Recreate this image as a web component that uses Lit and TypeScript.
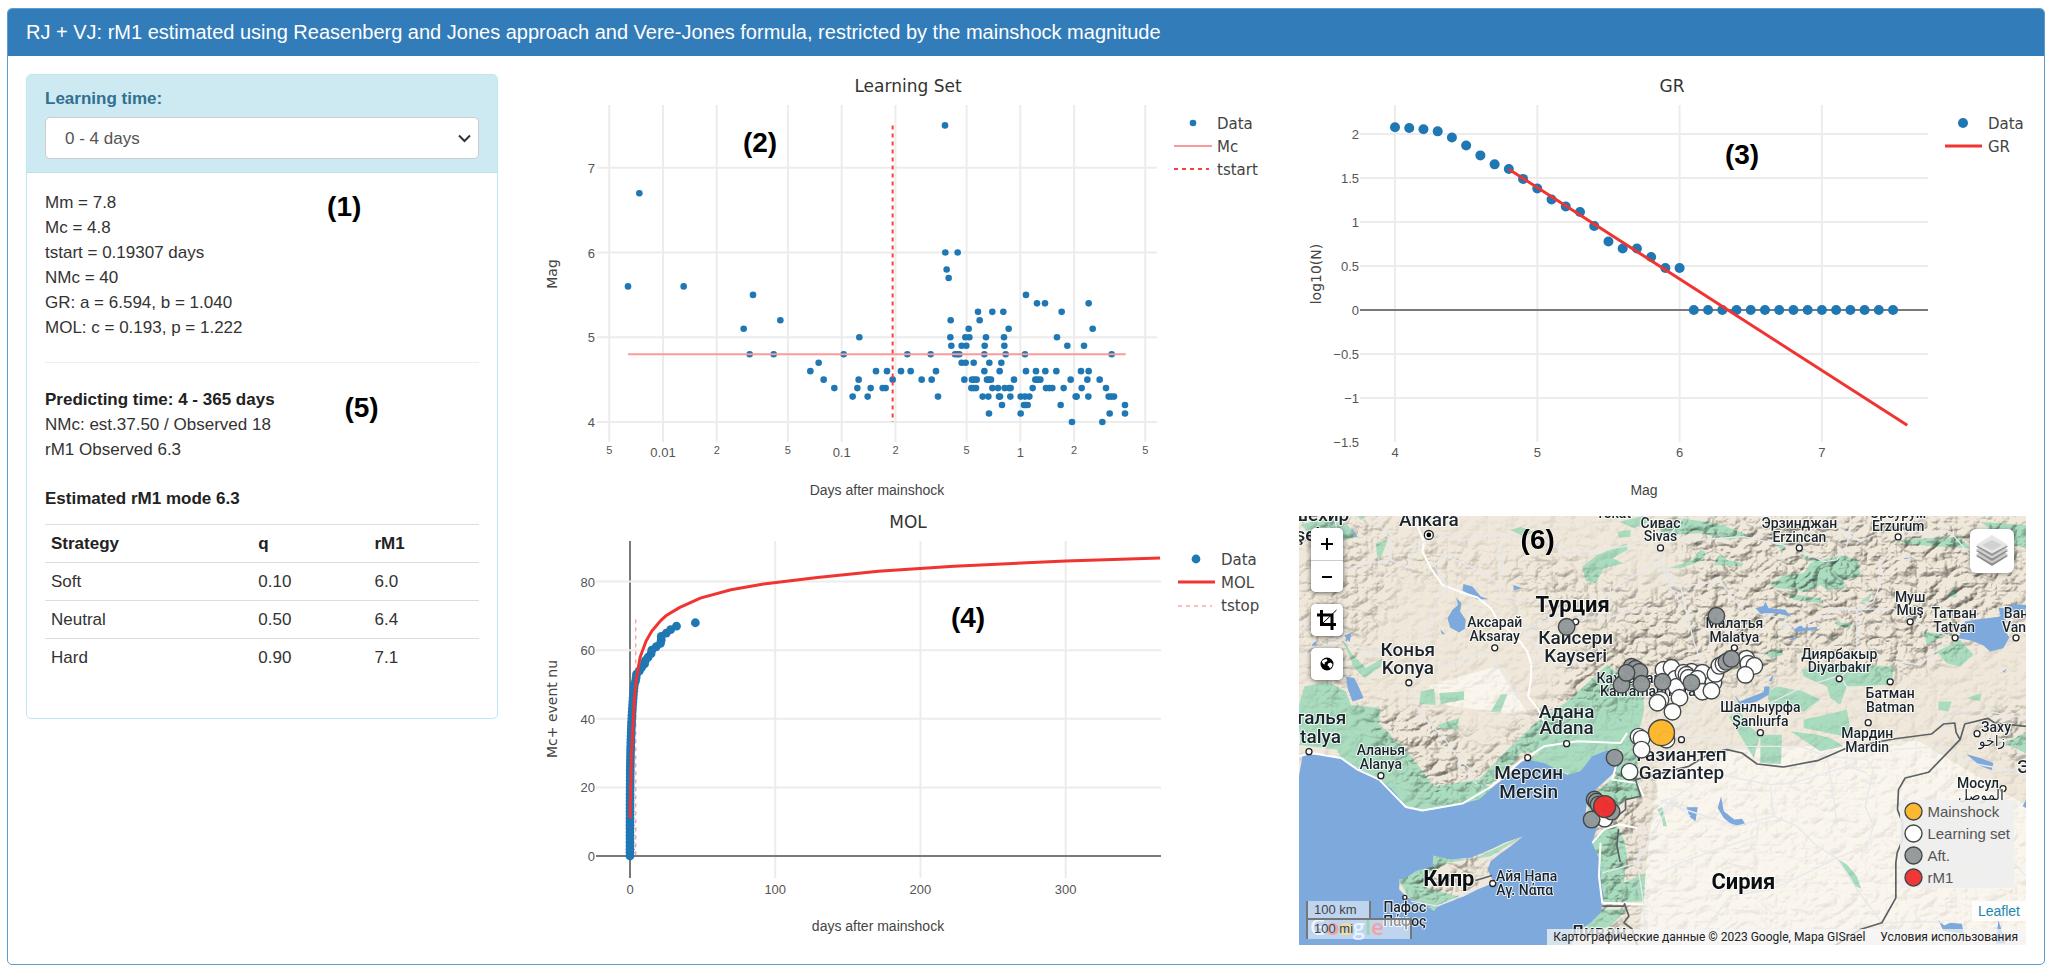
import { LitElement, html, svg, css } from "lit";
import { customElement } from "lit/decorators.js";

const SANS = css`"Liberation Sans", Arial, sans-serif`;

const chartStyles = css`
  :host { display: block; }
  svg { display: block; width: 100%; height: auto; overflow: visible; }
  text { fill: #444; }
  .title { font: 17px "DejaVu Sans", Verdana, sans-serif; fill: #333; text-anchor: middle; }
  .tick { font: 13px ${SANS}; fill: #555; text-anchor: middle; }
  .tick.left { text-anchor: end; }
  .minor { font-size: 11px; }
  .axis { font: 14px ${SANS}; fill: #444; text-anchor: middle; }
  .axis.side { font-family: "DejaVu Sans", Verdana, sans-serif; }
  .key { font: 15px "DejaVu Sans", Verdana, sans-serif; }
  .mark { font: bold 28px ${SANS}; fill: #000; text-anchor: middle; }
  .grid { stroke: #ececec; stroke-width: 2; }
  .zero { stroke: #777b7d; stroke-width: 2; }
  .dot { fill: #1f77b4; }
  .line { fill: none; stroke: #f03431; stroke-width: 3; }
  .thin { fill: none; stroke: #fa9a9a; stroke-width: 2; }
  .dash { fill: none; stroke: #f8403c; stroke-width: 2; stroke-dasharray: 4 4; }
  .faint { fill: none; stroke: #f37f7f; stroke-width: 1; stroke-dasharray: 4 4; }
`;

const vline = (x: number, top: number, bottom: number, cls = "grid") =>
  svg`<line class=${cls} x1=${x} x2=${x} y1=${top} y2=${bottom}></line>`;
const hline = (y: number, left: number, right: number, cls = "grid") =>
  svg`<line class=${cls} x1=${left} x2=${right} y1=${y} y2=${y}></line>`;

/* Aftershocks: magnitude followed by log-time steps, 536 steps to a decade. */
const EARLY: number[][] = [
  [6.7, 328], [5.6, 294, 461], [5.5, 669], [5.2, 751], [5.1, 641], [5, 988],
  [4.8, 659, 731, 941], [4.7, 866], [4.6, 841, 1038, 1071],
  [4.5, 881, 986, 1088], [4.4, 913, 982, 1022, 1058, 1067], [4.3, 968, 1013],
];
const LATE: number[][] = [
  [7.5, 135], [6, 136, 173], [5.8, 140], [5.7, 146], [5.5, 378], [5.4, 411, 435, 566],
  [5.3, 234, 277, 310, 485], [5.2, 152, 239], [5.1, 206, 326, 578],
  [5, 151, 196, 208, 258, 312, 471], [4.9, 154, 185, 199, 254, 313, 502, 552],
  [4.8, 22, 92, 165, 172, 178, 253, 317, 375, 635], [4.7, 185, 197, 221, 268, 304],
  [4.6, 3, 32, 108, 253, 299, 378, 408, 436, 469, 543, 566],
  [4.5, 65, 95, 193, 216, 223, 230, 261, 267, 273, 342, 406, 413, 421, 512, 562, 599],
  [4.4, 214, 221, 228, 277, 294, 314, 327, 332, 398, 438, 448, 457, 491, 545, 618],
  [4.3, 114, 248, 265, 297, 300, 331, 362, 375, 388, 527, 530, 565, 626, 634, 642],
  [4.2, 306, 372, 377, 383, 482, 675], [4.1, 267, 362, 629, 675], [4, 516, 607],
];

@customElement("learning-chart")
export class LearningChart extends LitElement {
  static styles = chartStyles;
  render() {
    const step = (s: number) => s / 3 - 5;
    const x = (days: number) => 128 + (Math.log10(days) + 2) * 178.67;
    const y = (m: number) => 348 - (m - 4) * 84.75;
    const ticks: [number, string, boolean][] = [
      [0.005, "5", true], [0.01, "0.01", false], [0.02, "2", true], [0.05, "5", true],
      [0.1, "0.1", false], [0.2, "2", true], [0.5, "5", true], [1, "1", false],
      [2, "2", true], [5, "5", true],
    ];
    const dots = (rows: number[][], shift: number) =>
      rows.flatMap(([m, ...steps]) =>
        steps.map((s) => svg`<circle class="dot" r="3.3" cx=${step(s + shift)} cy=${y(m)}></circle>`));
    return html`<svg viewBox="0 0 727 435" role="img" aria-label="Learning Set">
      <text class="title" x="373" y="18">Learning Set</text>
      ${ticks.map(([v, label, minor]) => svg`${vline(x(v), 31, 368)}
        <text class=${minor ? "tick minor" : "tick"} x=${x(v)} y=${minor ? 380 : 383}>${label}</text>`)}
      ${[4, 5, 6, 7].map((m) => svg`${hline(y(m), 62, 622)}
        <text class="tick left" x="60" y=${y(m) + 5}>${m}</text>`)}
      ${dots(EARLY, 0)}${dots(LATE, 1110)}
      ${hline(y(4.8), step(294), step(1787), "thin")}
      ${vline(step(1088), y(7.5), y(4), "dash")}
      <text class="axis" x="342" y="421">Days after mainshock</text>
      <text class="axis side" transform="translate(22 200) rotate(-90)">Mag</text>
      <circle class="dot" cx="658" cy="49" r="3.3"></circle>
      <text class="key" x="682" y="55">Data</text>
      ${hline(72, 639, 677, "thin")}
      <text class="key" x="682" y="78">Mc</text>
      ${hline(95, 639, 674, "dash")}
      <text class="key" x="682" y="101">tstart</text>
      <text class="mark" x="225" y="78">(2)</text>
    </svg>`;
  }
}

const GR_VALUES = [
  2.076, 2.068, 2.053, 2.03, 1.96, 1.87, 1.757, 1.655, 1.602, 1.49, 1.38, 1.255, 1.176,
  1.114, 0.954, 0.778, 0.699, 0.699, 0.602, 0.477, 0.477,
  0, 0, 0, 0, 0, 0, 0, 0, 0, 0, 0, 0, 0, 0, 0,
];

@customElement("gr-chart")
export class GrChart extends LitElement {
  static styles = chartStyles;
  render() {
    const x = (m: number) => 96 + (m - 4) * 142.3;
    const y = (v: number) => 236 - v * 88;
    return html`<svg viewBox="0 0 727 435" role="img" aria-label="GR">
      <text class="title" x="373" y="18">GR</text>
      ${[4, 5, 6, 7].map((m) => svg`${vline(x(m), 31, 368)}
        <text class="tick" x=${x(m)} y="383">${m}</text>`)}
      ${[2, 1.5, 1, 0.5, 0, -0.5, -1, -1.5].map((v) => svg`
        ${v === -1.5 ? "" : hline(y(v), 61, 629, v === 0 ? "zero" : "grid")}
        <text class="tick left" x="60" y=${y(v) + 5}>${String(v).replace("-", "−")}</text>`)}
      ${GR_VALUES.map((v, i) => svg`<circle class="dot" r="5" cx=${x(4 + i / 10)} cy=${y(v)}></circle>`)}
      <line class="line" x1=${x(4.8)} y1=${y(1.6)} x2=${x(7.6)} y2=${y(-1.31)}></line>
      <text class="axis" x="345" y="421">Mag</text>
      <text class="axis side" transform="translate(22 200) rotate(-90)">log10(N)</text>
      <circle class="dot" cx="664" cy="49" r="5"></circle>
      <text class="key" x="689" y="55">Data</text>
      ${hline(72, 646, 683, "line")}
      <text class="key" x="689" y="78">GR</text>
      <text class="mark" x="443" y="90">(3)</text>
    </svg>`;
  }
}

const MOL_LATE = [
  [3, 50], [3.8, 51], [4.2, 52], [4.5, 53], [6.5, 54], [8, 55], [10, 56], [10.6, 57], [12.5, 58],
  [14.5, 59], [15, 60], [18, 61], [21, 62], [21.5, 63], [21.5, 64], [25, 65], [28, 66], [32, 67], [45, 68],
];
const MOL_FIT = [
  [0, 11], [0.5, 20], [1, 30], [2, 38], [3, 46], [4.5, 52], [7, 58], [11, 62.6], [15, 65.6], [21.5, 68.8],
  [25, 70.1], [34, 72.4], [48.4, 75.2], [69.5, 77.6], [92, 79.3], [129, 81.2], [171, 83],
  [223, 84.5], [300, 86], [365, 86.9],
];

@customElement("mol-chart")
export class MolChart extends LitElement {
  static styles = chartStyles;
  render() {
    const x = (d: number) => 95 + d * 1.4523;
    const y = (n: number) => 340 - n * 3.43;
    const early = Array.from({ length: 50 }, (_, n) => [3 * Math.pow(n / 50, 4), n]);
    return html`<svg viewBox="0 0 727 430" role="img" aria-label="MOL">
      <text class="title" x="373" y="12">MOL</text>
      ${[0, 100, 200, 300].map((d) => svg`${vline(x(d), 25, 362, d ? "grid" : "zero")}
        <text class="tick" x=${x(d)} y="378">${d}</text>`)}
      ${[0, 20, 40, 60, 80].map((n) => svg`${hline(y(n), 61, 626, n ? "grid" : "zero")}
        <text class="tick left" x="60" y=${y(n) + 5}>${n}</text>`)}
      ${vline(x(4), y(69), y(0), "faint")}
      ${[...early, ...MOL_LATE].map(([d, n]) => svg`<circle class="dot" r="4.4" cx=${x(d)} cy=${y(n)}></circle>`)}
      <polyline class="line" points=${MOL_FIT.map(([d, n]) => `${x(d)},${y(n)}`).join(" ")}></polyline>
      <text class="axis" x="343" y="415">days after mainshock</text>
      <text class="axis side" transform="translate(22 193) rotate(-90)">Mc+ event nu</text>
      <circle class="dot" cx="661" cy="43" r="4.4"></circle>
      <text class="key" x="686" y="49">Data</text>
      ${hline(66, 643, 680, "line")}
      <text class="key" x="686" y="72">MOL</text>
      ${hline(90, 643, 677, "faint")}
      <text class="key" x="686" y="95">tstop</text>
      <text class="mark" x="433" y="111">(4)</text>
    </svg>`;
  }
}

type Label = [string, number, number, string?];
const LABELS: Label[] = [
  ["Эскишехир", 0, 5, "city"], ["Eskişehir", 0, 25, "city"], ["Ankara", 130, 10, "city"],
  ["Tokat", 315, 2], ["Сивас", 362, 12], ["Sivas", 362, 25],
  ["Турция", 274, 96, "land"], ["Кайсери", 277, 128, "city"], ["Kayseri", 277, 146, "city"],
  ["Аксарай", 196, 111], ["Aksaray", 196, 125], ["Конья", 109, 140, "city"], ["Konya", 109, 158, "city"],
  ["Кахраманмараш", 353, 167], ["Kahramanmaraş", 353, 180],
  ["Адана", 268, 202, "city"], ["Adana", 268, 218, "city"], ["Анталья", 10, 208, "city"],
  ["Antalya", 10, 227, "city"], ["Аланья", 82, 239], ["Alanya", 82, 253],
  ["Мерсин", 230, 263, "city"], ["Mersin", 230, 282, "city"], ["Кипр", 150, 371, "land"],
  ["Пафос", 106, 397], ["Πάφος", 106, 411], ["Айя Напа", 228, 366], ["Αγ. Νάπα", 226, 380],
  ["Ливан", 300, 423, "city"], ["Эрзинджан", 501, 12], ["Erzincan", 501, 26],
  ["Эрзурум", 600, 2], ["Erzurum", 600, 15], ["Муш", 612, 86], ["Muş", 612, 99],
  ["Татван", 656, 102], ["Tatvan", 656, 116], ["Ван", 718, 102], ["Van", 716, 116],
  ["Малатья", 436, 112], ["Malatya", 436, 126], ["Диярбакыр", 541, 143], ["Diyarbakır", 541, 156],
  ["Батман", 592, 182], ["Batman", 592, 196], ["Шанлыурфа", 462, 196], ["Şanlıurfa", 462, 210],
  ["Заху", 698, 216], ["زاخو", 694, 230], ["Мардин", 569, 222], ["Mardin", 569, 236],
  ["Газиантеп", 383, 245, "city"], ["Gaziantep", 383, 263, "city"], ["Сирия", 445, 374, "land"],
  ["Мосул", 680, 272], ["الموصل", 683, 284], ["Эрбиль", 752, 257, "city"],
];
const TOWNS = [
  [362, 32], [277, 106], [196, 132], [110, 167], [268, 228], [229, 242], [82, 260], [10, 236],
  [501, 32], [600, 21], [612, 106], [657, 122], [718, 122], [436, 132], [541, 163], [592, 166],
  [570, 207], [462, 217], [679, 218], [705, 273], [383, 224], [194, 368],
];
type Quake = [number, number, string];
const QUAKES: Quake[] = [
  [268, 111, "aft"], [418, 100, "aft"], [333, 151, "aft"], [337, 153, "aft"], [341, 156, "aft"],
  [323, 169, "aft"], [328, 157, "aft"], [343, 168, "aft"], [365, 154, "learn"], [373, 152, "learn"],
  [377, 163, "learn"], [378, 171, "learn"], [364, 166, "aft"], [393, 156, "learn"], [385, 157, "learn"],
  [404, 157, "learn"], [388, 159, "learn"], [390, 162, "learn"], [399, 163, "learn"], [415, 167, "learn"],
  [417, 158, "learn"], [404, 176, "learn"], [413, 175, "learn"], [393, 167, "aft"], [421, 150, "learn"],
  [425, 148, "learn"], [448, 143, "learn"], [450, 148, "learn"], [428, 146, "aft"], [433, 143, "aft"],
  [456, 150, "learn"], [447, 159, "learn"], [381, 182, "learn"], [362, 184, "learn"], [359, 187, "learn"],
  [374, 196, "learn"], [340, 221, "learn"], [343, 223, "learn"], [343, 234, "learn"], [331, 256, "learn"],
  [368, 224, "learn"], [316, 242, "aft"], [296, 284, "aft"], [298, 286, "aft"], [300, 289, "aft"],
  [306, 303, "learn"], [313, 296, "aft"], [293, 304, "aft"],
];

/* Terrain shapes are drawn in thirds of a map unit; each group has its own origin. */
const TERRAIN = {
  greens: svg`
    <g transform="translate(-24 -33)">
      <path d="M30 60L90 40L170 60L200 95L150 110L60 90Z M255 115L290 105L268 165L258 150Z M875 185L920 150L1010 115L1010 135L965 160L1000 175L940 190L915 235L885 228Z
        M985 50L1060 33L1085 45L1030 70Z M980 80L1020 75L1020 95L985 98Z M150 395L185 450L225 490L275 460L270 485L220 520L190 490Z
        M390 560L430 552L435 600L385 598Z M445 565L520 560L520 585L450 598Z M630 570L650 568L630 620L600 622Z M440 660L505 640L500 675L450 672Z
        M40 545L110 530L165 560L180 600L268 610L265 660L300 690L330 760L20 720L24 600Z M200 33L225 33L210 45Z M660 75L690 65L730 80L700 95Z"/>
      <path d="M950 480L1000 520L1060 545L1060 620L1040 700L990 760L960 745L900 745L850 770L800 790L740 740L690 745L650 800L600 840L560 830L650 735L740 650L830 590Z"/>
    </g>
    <g transform="translate(1086 -33)">
      <path d="M0 60L60 40L170 55L265 90L210 105L120 85L0 90Z M25 190L95 165L120 135L135 140L130 165L60 190Z M160 180L180 145L200 165L250 175L240 185Z
        M370 210L430 205L450 175L540 150L595 165L600 215L550 225L555 250L500 255L480 240L440 260L350 250L330 240Z M345 120L375 115L370 138Z
        M415 145L470 165L530 175L500 185L440 165Z M715 105L900 95L930 130L830 125L740 118Z M960 50L1098 60L1098 130L1060 120Z M380 265L480 280L490 295L400 285Z
        M525 352L575 355L570 370L530 362Z M600 290L635 265L625 290Z M860 275L885 245L890 278Z M790 380L860 390L800 420Z M830 440L900 405L940 450L900 485L860 475Z
        M425 495L520 475L700 485L695 540L560 545L540 600L510 580L500 545L430 515Z M320 560L350 545L430 560L480 585L430 620L380 605L330 615Z M430 645L560 615L575 700L430 670Z
        M920 580L965 565L960 590Z M835 590L875 590L865 620L835 615Z M315 445L360 430L370 450L330 460Z M205 635L240 620L260 660L300 690L280 760Z"/>
      <path d="M300 690L365 690L362 778L300 775Z M390 680L470 690L510 700L550 725L480 740Z"/>
    </g>
    <g transform="translate(-24 642)">
      <path d="M120 20L330 40L430 170L560 150L610 180L560 215L400 245L345 230L265 150L150 85Z M710 90L770 55L890 50L950 62L900 120L840 135Z"/>
      <path d="M985 20L1050 20L1040 140L1055 200L1000 210L940 300L905 340L930 440L935 520L1060 515L1065 430L1000 460L1010 380L1000 330L980 290L900 290L890 210L975 140Z"/>
      <path d="M325 450L375 425L425 410L428 378L540 392L640 345L697 320L600 380L470 400L420 425L395 470L500 500L430 545L350 500Z"/>
      <path d="M935 540L1010 540L960 590L860 620Z M1100 240L1115 232L1130 295Z"/>
    </g>
    <g transform="translate(1086 642)">
      <path d="M530 388L560 405L590 440L603 478L585 470L565 435Z M0 230L18 290L8 290Z M1030 40L1098 10L1098 70Z"/>
    </g>`,
  lakes: svg`
    <g transform="translate(-24 -33)">
      <path d="M496 278L512 295L508 320L525 345L522 372L505 383L478 368L470 340L485 315L502 300Z M518 237L545 245L570 275L594 283L560 284L530 265L515 257Z
        M668 240L695 250L669 256Z M165 515L190 520L205 550L218 580L185 590L170 550Z M160 392L182 384L176 412Z M448 373L463 388L454 388Z M770 341L752 354L758 345Z
        M66 415L78 408L76 420L62 424Z M180 66L202 98L188 90Z M984 640L994 645L990 651Z"/>
    </g>
    <g transform="translate(1086 -33)">
      <path d="M895 400L915 350L945 345L1022 335L1015 308L1035 310L1060 297L1098 300L1098 318L1042 325L1030 370L1048 398L1030 430L990 440L970 422L935 408Z
        M285 310L310 303L315 290L325 310L375 315L392 336L350 325L300 325Z M400 375L422 360L430 370L470 366L470 374L405 382Z M385 405L420 394L395 408Z
        M222 570L238 590L275 575L310 562L312 545L328 545L325 570L290 590L245 600L260 630L240 605Z M340 508L335 530L325 528Z M730 160L757 157L735 163Z M1028 500L1040 492L1033 504Z"/>
    </g>
    <g transform="translate(1086 642)">
      <path d="M182 200L172 235L190 265L220 290L256 285L245 268L222 270L190 245Z M78 233L112 233L105 275L88 262Z M918 73L960 85L1000 100L995 122L960 108Z
        M835 572L852 588L870 580L905 583L912 612L850 605Z M1015 572L1037 642L1008 642Z M1098 210L1088 230L1098 235Z"/>
    </g>`,
  roads: svg`
    <g transform="translate(-24 -33)">
      <path class="major" d="M380 33L382 70L400 110L395 140L420 190L455 240L520 265L560 278L600 310L620 345L680 400L710 440L722 480L720 530L712 575L740 610L760 650"/>
      <path d="M24 250L120 220L210 180L300 165L355 190L370 130L400 110L470 95L520 105L600 90L680 100L760 110L830 140L900 140L1000 125L1100 100"/>
      <path d="M350 535L380 490L410 400L420 330L440 290L470 250L430 180L460 150L560 195L620 230L635 275L720 290"/>
      <path d="M24 350L150 400L200 440L350 450M355 545L370 590L400 640L460 700L510 770L560 810M440 490L610 430L620 480L680 580L712 580M722 480L760 455L700 375L780 340L950 340L1080 300M950 340L960 250L1110 170L1110 130L1180 33M1110 170L1140 250L1200 340"/>
      <path d="M250 33L300 110L300 165M130 33L160 200M24 460L100 430L150 400M540 290L540 360L620 350M600 90L640 150L630 220"/>
    </g>
    <g transform="translate(1086 -33)">
      <path d="M0 170L50 245L180 230L250 320L380 340L360 370L430 360L500 330L520 310L590 315L700 310L760 350L880 400M590 315L640 290L670 210L660 180L700 120L720 95L870 80L930 150M590 315L590 480L540 515L600 610L620 650M700 470L780 480L860 410M300 610L380 570L420 550L530 515M0 90L100 105L250 95L320 110L416 130L490 170L530 165L560 120L570 60L570 33M60 245L100 410L130 500L100 620L60 700M850 690L860 640L920 610L1098 640M480 33L600 110L640 90"/>
    </g>
    <g transform="translate(-24 642)">
      <path class="major" d="M24 80L60 70L150 85L200 120L265 150L345 232L395 243L515 222L600 172L690 95L760 50L860 35L990 40L1010 10M990 60L965 150L1040 160L1060 200M905 340L940 300L985 285L1040 295M930 340L925 440L935 520L1060 525"/>
      <path d="M1145 210L1060 300L1040 400L935 430M1145 220L1200 260M1060 525L1063 640M1060 525L1040 400L1145 210M360 515L440 530L510 500L555 470"/>
      <path d="M500 100L560 165" />
    </g>
    <g transform="translate(1086 642)">
      <path d="M0 215L40 205L150 130L330 165L340 260L300 270L230 290L90 245L0 215M340 260L410 290L470 350L530 385L590 480L650 560L665 582L780 575L850 580M0 430L60 400L140 370L290 320L295 280M530 385L400 450L330 480L210 500L120 620M530 385L620 350L640 290L615 230L640 120L620 90L500 80L420 50L200 50L180 20L40 20M330 165L400 160L560 110L620 130M700 60L850 50L930 100L1098 130M1060 400L1098 440M500 80L520 200L530 290M200 400L280 420L300 480"/>
    </g>`,
  borders: svg`
    <path d="M916 927L961 897L981 882L981 852L1026 842L1011 792L1171 752L1236 712L1286 702L1331 712L1376 745L1456 754L1561 734L1646 697L1786 670L1900 655L1936 625L1970 622L1974 650L1986 672L1891 770L1821 787L1801 822L1798 882L1813 922L1813 972L1797 1012L1793 1042L1793 1147L1751 1222L1686 1242L1611 1290M1986 672L2000 625L2070 608L2090 622L2184 632M911 1172L976 1172L978 1165L991 1202L976 1222L1000 1240L1016 1290M530 1095L580 1080M960 940L955 990L965 1040"/>`,
};

@customElement("quake-map")
export class QuakeMap extends LitElement {
  static styles = css`
    :host { display: block; position: relative; overflow: hidden; font: 14px ${SANS}; color: #333; }
    .map { display: block; width: 100%; height: auto; isolation: isolate; }
    .label { font: 500 14px Roboto, "DejaVu Sans", sans-serif; fill: #1b242b; stroke: #fff; stroke-width: 2; stroke-opacity: .8; paint-order: stroke; text-anchor: middle; stroke-linejoin: round; }
    .label.city { font-size: 19px; }
    .label.land { font-size: 22px; font-weight: 700; fill: #0b0f12; }
    .town { fill: #fff; stroke: #222; stroke-width: 1.3; }
    .green { fill: #aadcc0; }
    .water { fill: #7ea9dc; }
    .roads { fill: none; stroke: #e6e8ee; stroke-width: 4; stroke-linejoin: round; }
    .roads .major { stroke: #fff; stroke-width: 6; }
    .borders { fill: none; stroke: #5c6164; stroke-width: 5; stroke-linejoin: round; }
    .relief { mix-blend-mode: multiply; opacity: .75; }
    .quake { stroke: #434647; stroke-width: 1.4; fill-opacity: .96; }
    .learn { fill: #fff; }
    .aft { fill: #929799; }
    .main { fill: #fdb529; }
    .rm1 { fill: #ef2f2f; }
    .mark { font: bold 28px ${SANS}; text-anchor: middle; stroke: #fff; stroke-width: 1; paint-order: stroke; }
    .google { font: 22px "Open Sans", sans-serif; font-weight: 600; }
    .tools { position: absolute; left: 12px; top: 12px; display: flex; flex-direction: column; gap: 12px; }
    .group { display: flex; flex-direction: column; border-radius: 5px; background: #fff; box-shadow: 0 1px 5px rgba(0,0,0,.6); overflow: hidden; }
    button { display: grid; place-items: center; box-sizing: border-box; width: 32px; height: 32px; padding: 0; border: 0; background: #fff; color: #000; cursor: pointer; }
    .group button + button { border-top: 1px solid #ccc; }
    .layers { position: absolute; right: 12px; top: 13px; width: 44px; height: 44px; border-radius: 6px; box-shadow: 0 1px 5px rgba(0,0,0,.4); }
    .scale { position: absolute; left: 7px; bottom: 6px; font-size: 13px; line-height: 18px; color: #444; }
    .scale div { box-sizing: border-box; height: 19px; padding-left: 6px; background: rgba(255,255,255,.5); border: 2px solid #777; border-top: 0; width: 65px; }
    .scale div + div { width: 106px; border-top: 2px solid #777; border-bottom: 0; margin-top: -2px; height: 21px; }
    .corner { position: absolute; right: 0; bottom: 24px; display: flex; flex-direction: column; align-items: flex-end; gap: 13px; }
    .legend { list-style: none; margin: 0 12px 0 0; padding: 0 4px; background: rgba(238,238,238,.9); font-size: 15px; color: #555; }
    .legend li { display: flex; align-items: center; gap: 4px; height: 22px; }
    .leaflet { padding: 0 6px; line-height: 20px; background: rgba(255,255,255,.85); color: #1d87ad; font-size: 14px; text-decoration: none; }
    .credits { position: absolute; right: 0; bottom: 0; display: flex; gap: 15px; padding: 0 8px 0 6px; background: rgba(245,245,245,.75); font: 12px/16px Roboto, sans-serif; color: #222; white-space: nowrap; }
    .credits a { color: inherit; text-decoration: none; }
  `;
  render() {
    const swatch = (cls: string) => html`<svg width="19" height="19" viewBox="0 0 19 19" aria-hidden="true">
      <circle class="quake ${cls}" cx="9.5" cy="9.5" r="8.5"></circle></svg>`;
    return html`
      <svg class="map" viewBox="0 0 728 430" role="img" aria-label="Earthquake map">
        <defs>
          <filter id="relief" x="0" y="0" width="1" height="1" color-interpolation-filters="sRGB">
            <feTurbulence type="turbulence" baseFrequency=".05 .065" numOctaves="4" seed="11"></feTurbulence>
            <feDiffuseLighting surfaceScale="5" diffuseConstant="1.22" lighting-color="#fffdf8">
              <feDistantLight azimuth="225" elevation="55"></feDistantLight>
            </feDiffuseLighting>
          </filter>
          <filter id="soften" x="-.2" y="-.2" width="1.4" height="1.4"><feGaussianBlur stdDeviation="10"></feGaussianBlur></filter>
          <mask id="mountains" maskUnits="userSpaceOnUse" x="0" y="0" width="728" height="430">
            <rect width="728" height="430" fill="#1c1c1c"></rect>
            <g filter="url(#soften)">
              <path fill="#777" d="M0 0H90V90L60 140L40 200L0 120ZM60 20L120 60L260 40L370 80L340 130L250 100L180 40Z"></path>
              <path fill="#c4c4c4" d="M50 190L150 200L175 250L250 190L290 130L400 60L728 0V100L600 160L520 130L460 170L380 160L330 190L270 190L200 270L130 290L90 240ZM680 200L728 190V260ZM300 240L345 240L345 300L330 420L300 400ZM100 340L190 340L160 390L110 380ZM360 0L728 0V60L400 60Z"></path>
            </g>
          </mask>
        </defs>
        <rect width="728" height="430" fill="#f0e9db"></rect>
        <path fill="#faf6ee" d="M360 250L420 235L620 225L728 290V430H340L350 330ZM130 170L200 150L230 200L150 190Z"></path>
        <g class="green" transform="scale(.33333)">${TERRAIN.greens}</g>
        <g class="relief" mask="url(#mountains)"><rect width="728" height="430" filter="url(#relief)"></rect></g>
        <g transform="scale(.33333)">
          <path class="water" fill-rule="evenodd" d="M0 782L11 717L86 717L126 727L176 757L241 792L276 817L321 872L371 887L426 877L491 864L541 852L591 807L626 782L666 737L686 732L736 742L806 777L846 767L881 722L926 704L961 717L966 742L946 772L896 817L866 852L860 900L896 932L881 982L906 1042L906 1092L916 1142L906 1192L876 1222L846 1242L816 1290L0 1290Z
            M301 1092L321 1087L351 1067L401 1052L404 1020L456 1032L516 1027L576 1002L616 982L673 962L636 992L601 1017L576 1037L566 1062L586 1102L536 1122L496 1142L446 1162L416 1172L406 1187L376 1167L326 1147L301 1122Z"></path>
          <g class="water">${TERRAIN.lakes}</g>
          <g class="roads">${TERRAIN.roads}</g>
          <g class="borders">${TERRAIN.borders}</g>
        </g>
        ${TOWNS.map(([x, y]) => svg`<circle class="town" cx=${x} cy=${y} r="3"></circle>`)}
        <circle class="town" cx="130" cy="19" r="4.5"></circle><circle cx="130" cy="19" r="2.4"></circle>
        <circle class="town" cx="106" cy="382" r="2"></circle>
        ${LABELS.map(([t, x, y, cls]) => svg`<text class="label ${cls ?? ""}" x=${x} y=${y}>${t}</text>`)}
        ${QUAKES.map(([x, y, cls]) => svg`<circle class="quake ${cls}" cx=${x} cy=${y} r="8.3"></circle>`)}
        <circle class="quake main" cx="363" cy="217" r="13"></circle>
        <circle class="quake rm1" cx="306" cy="291" r="11"></circle>
        <text class="google" x="11" y="420"><tspan fill="#dbe7ff">G</tspan><tspan fill="#ea4335">o</tspan><tspan fill="#fbbc05">o</tspan><tspan fill="#dbe7ff">g</tspan><tspan fill="#34a853">l</tspan><tspan fill="#ea4335">e</tspan></text>
        <text class="mark" x="239" y="33">(6)</text>
      </svg>
      <div class="tools">
        <div class="group">
          <button aria-label="Zoom in"><svg width="14" height="14" viewBox="0 0 14 14" stroke="#000" stroke-width="2"><path d="M1 7H13M7 1V13"></path></svg></button>
          <button aria-label="Zoom out"><svg width="14" height="14" viewBox="0 0 14 14" stroke="#000" stroke-width="2"><path d="M2 7H12"></path></svg></button>
        </div>
        <div class="group">
          <button aria-label="Select area"><svg width="22" height="22" viewBox="0 0 22 22" fill="none" stroke="#000"><path stroke-width="3" d="M5.500 1V15.500H20M1 6H16V21"></path><path stroke-width="1" d="M6 15L20.500 1"></path></svg></button>
        </div>
        <div class="group">
          <button aria-label="World view"><svg width="14" height="14" viewBox="0 0 14 14"><circle cx="7" cy="7" r="6.500"></circle><path fill="#fff" d="M2 4L4 2.500L6.500 2L7.500 3.500L6 5L4.500 5.500L5 7.500L3.500 7L2 5.500ZM8 6.500L10.500 5.500L12.500 7L12 9.500L10 11.500L9 9.500L7.500 8.500Z"></path></svg></button>
        </div>
      </div>
      <button class="layers" aria-label="Layers"><svg width="34" height="32" viewBox="0 0 34 32">
        <path fill="#8b8b8b" d="M1 21L17 12L33 21L17 31Z"></path><path fill="#c9c9c9" d="M1 19.500L17 10L33 19.500L17 28.500Z"></path>
        <path fill="#8f8f8f" d="M1 16L17 7L33 16L17 26Z"></path><path fill="#d0d0d0" d="M1 14.500L17 5L33 14.500L17 23.500Z"></path>
        <path fill="#969696" d="M1 11.500L17 3L33 11.500L17 21Z"></path><path fill="#e6e6e6" d="M1 10L17 0L33 10L17 18.500Z"></path><path fill="#cfd2d1" d="M7 10L17 5L27 10L17 15.500Z"></path>
      </svg></button>
      <div class="scale"><div>100 km</div><div>100 mi</div></div>
      <div class="corner">
        <ul class="legend">
          <li>${swatch("main")}Mainshock</li>
          <li>${swatch("learn")}Learning set</li>
          <li>${swatch("aft")}Aft.</li>
          <li>${swatch("rm1")}rM1</li>
        </ul>
        <a class="leaflet" href="#leaflet">Leaflet</a>
      </div>
      <div class="credits"><span>Картографические данные © 2023 Google, Mapa GISrael</span><a href="#terms">Условия использования</a></div>
    `;
  }
}

@customElement("result-panel")
export class ResultPanel extends LitElement {
  static styles = css`
    :host { display: block; box-sizing: border-box; border: 1px solid #bce8f1; border-radius: 5px; background: #fff; font: 17px/25px ${SANS}; color: #333; overflow: hidden; }
    .head { padding: 11px 18px 13px; background: #cdeaf3; border-bottom: 1px solid #b5e4ee; }
    label { display: block; margin-bottom: 6px; font-weight: bold; color: #31708f; }
    .pick { position: relative; }
    select { display: block; width: 100%; height: 42px; padding: 0 19px; appearance: none; border: 1px solid #ccc; border-radius: 5px; background: #fff; font: inherit; color: #555; }
    .pick svg { position: absolute; right: 8px; top: 17px; pointer-events: none; }
    .body { padding: 17px 18px 42px; }
    section { position: relative; }
    p { margin: 0; }
    hr { margin: 22px 0 24px; border: 0; border-top: 1px solid #eee; }
    h3 { margin: 24px 0 13px; font-size: inherit; color: #222; }
    strong { color: #222; }
    .mark { position: absolute; left: 65%; top: 0; font: bold 28px/34px ${SANS}; color: #000; }
    .mark.low { left: 69%; top: 4px; }
    table { width: 100%; border-collapse: collapse; table-layout: fixed; }
    th, td { height: 25px; padding: 6px; border-top: 1px solid #ddd; text-align: left; }
    th { color: #222; }
    .wide { width: 45%; }
    .mid { width: 24%; }
  `;
  render() {
    const rows = [["Soft", "0.10", "6.0"], ["Neutral", "0.50", "6.4"], ["Hard", "0.90", "7.1"]];
    return html`
      <div class="head">
        <label for="period">Learning time:</label>
        <div class="pick">
          <select id="period"><option>0 - 4 days</option><option>0 - 7 days</option><option>0 - 30 days</option></select>
          <svg width="13" height="9" viewBox="0 0 13 9" fill="none" stroke="#333" stroke-width="2"><path d="M1 1.500L6.500 7L12 1.500"></path></svg>
        </div>
      </div>
      <div class="body">
        <section>
          <p>Mm = 7.8</p><p>Mc = 4.8</p><p>tstart = 0.19307 days</p><p>NMc = 40</p>
          <p>GR: a = 6.594, b = 1.040</p><p>MOL: c = 0.193, p = 1.222</p>
          <span class="mark">(1)</span>
        </section>
        <hr />
        <section>
          <p><strong>Predicting time: 4 - 365 days</strong></p>
          <p>NMc: est.37.50 / Observed 18</p><p>rM1 Observed 6.3</p>
          <span class="mark low">(5)</span>
        </section>
        <h3>Estimated rM1 mode 6.3</h3>
        <table>
          <thead><tr><th class="wide">Strategy</th><th class="mid">q</th><th>rM1</th></tr></thead>
          <tbody>${rows.map((r) => html`<tr>${r.map((c) => html`<td>${c}</td>`)}</tr>`)}</tbody>
        </table>
      </div>`;
  }
}

@customElement("app-root")
export class AppRoot extends LitElement {
  static styles = css`
    :host { display: block; padding: 8px 5px 5px 7px; background: #fff; font-family: ${SANS}; }
    .panel { border: 1px solid #5b9bcf; border-radius: 5px; overflow: hidden; }
    h1 { margin: 0; padding: 11px 18px 12px; background: #327cb9; color: #fff; font-size: 20px; line-height: 24px; font-weight: 400; }
    .content { display: grid; grid-template-columns: minmax(0, 472fr) minmax(0, 727fr) minmax(0, 727fr); gap: 37px; align-items: start; padding: 18px; }
    .stack { display: flex; flex-direction: column; gap: 7px; }
  `;
  render() {
    return html`<main class="panel">
      <h1>RJ + VJ: rM1 estimated using Reasenberg and Jones approach and Vere-Jones formula, restricted by the mainshock magnitude</h1>
      <div class="content">
        <result-panel></result-panel>
        <div class="stack"><learning-chart></learning-chart><mol-chart></mol-chart></div>
        <div class="stack"><gr-chart></gr-chart><quake-map></quake-map></div>
      </div>
    </main>`;
  }
}
